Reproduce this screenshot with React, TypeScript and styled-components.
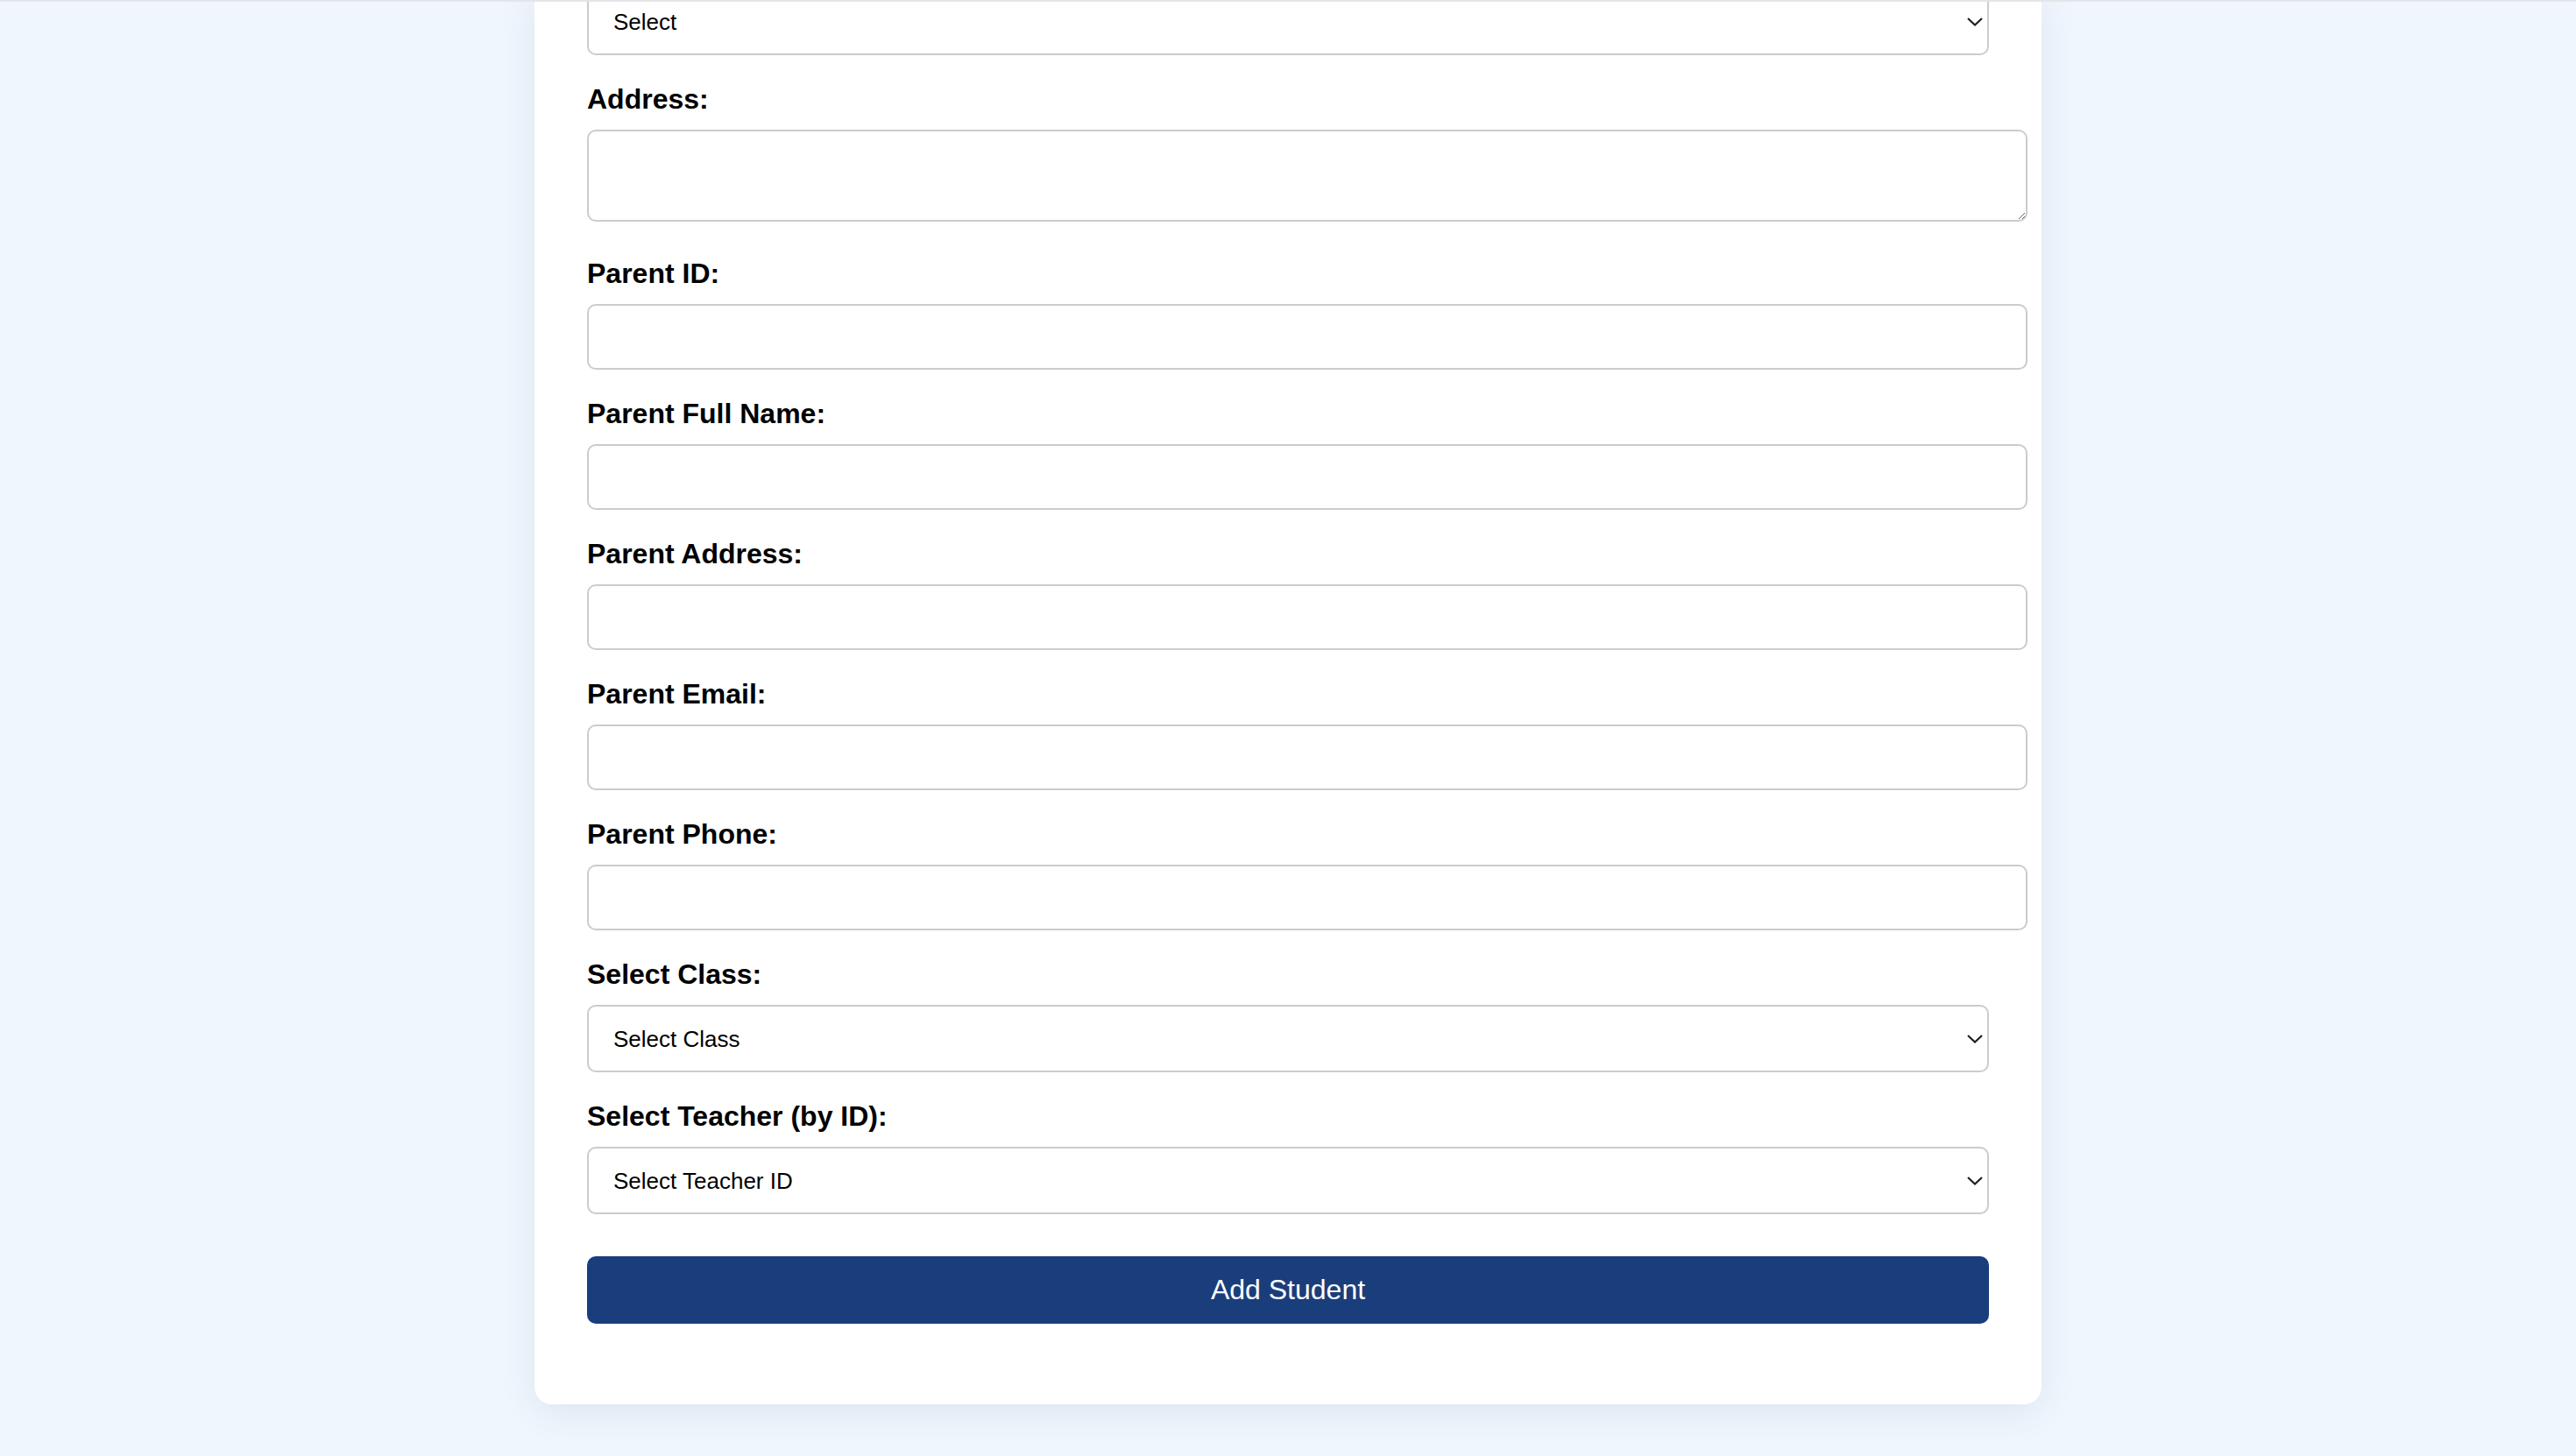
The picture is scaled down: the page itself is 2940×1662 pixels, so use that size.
import React from 'react';
import styled, { createGlobalStyle } from 'styled-components';

const GlobalStyle = createGlobalStyle`
  html, body {
    margin: 0;
    padding: 0;
    background: #f0f6fd;
  }
  * {
    font-family: 'Liberation Sans', Arial, sans-serif;
  }
`;

const Page = styled.div`
  min-height: 100vh;
  border-top: 2px solid #e3e5e9;
  overflow: hidden;
  background: #f0f6fd;
`;

const Card = styled.div`
  width: 1720px;
  box-sizing: border-box;
  margin: 0 auto;
  padding: 0 60px 92px;
  background: #ffffff;
  border-radius: 0 0 20px 20px;
  box-shadow: 0 10px 40px rgba(40, 70, 120, 0.09);
`;

const Field = styled.div<{ $first?: boolean; $gap?: number }>`
  margin-top: ${(p) => (p.$first ? '-16px' : '0')};
  margin-bottom: ${(p) => p.$gap ?? 29}px;
`;

const Label = styled.label`
  display: block;
  font-size: 32px;
  font-weight: 700;
  line-height: 42px;
  color: #000;
  margin-bottom: 14px;
`;

const TextInput = styled.input`
  display: block;
  width: 100%;
  box-sizing: content-box;
  height: 31px;
  padding: 20px;
  border: 2px solid #cccccc;
  border-radius: 10px;
  background: #fff;
  font-size: 26px;
  outline: none;
`;

const TextArea = styled.textarea`
  display: block;
  width: 100%;
  box-sizing: content-box;
  height: 61px;
  padding: 20px;
  border: 2px solid #cccccc;
  border-radius: 10px;
  background: #fff;
  font-size: 26px;
  outline: none;
  resize: vertical;
`;

const SelectWrap = styled.div`
  position: relative;
`;

const Select = styled.select`
  display: block;
  width: 100%;
  height: 77px;
  box-sizing: border-box;
  padding: 0 40px 0 28px;
  border: 2px solid #cccccc;
  border-radius: 10px;
  background: #fff;
  color: #000;
  font-size: 26px;
  appearance: none;
  -webkit-appearance: none;
  outline: none;
`;

const Chevron = styled.svg`
  position: absolute;
  right: 7px;
  top: 50%;
  margin-top: -5px;
  pointer-events: none;
`;

const SubmitButton = styled.button`
  display: block;
  width: 100%;
  height: 77px;
  margin-top: 48px;
  border: none;
  border-radius: 10px;
  background: #1a3e7b;
  color: #fff;
  font-size: 32px;
  cursor: pointer;
`;

const DropDown: React.FC<{ placeholder: string }> = ({ placeholder }) => (
  <SelectWrap>
    <Select defaultValue="">
      <option value="">{placeholder}</option>
    </Select>
    <Chevron width="18" height="10" viewBox="0 0 18 10">
      <polyline points="1,1 9,8.5 17,1" fill="none" stroke="#1f1f1f" strokeWidth="2.2" />
    </Chevron>
  </SelectWrap>
);

const inputs = ['Parent ID:', 'Parent Full Name:', 'Parent Address:', 'Parent Email:', 'Parent Phone:'];

const App: React.FC = () => {
  return (
    <Page>
      <GlobalStyle />
      <Card>
        <Field $first>
          <DropDown placeholder="Select" />
        </Field>

        {/* textarea sits inline in the original, so it leaves extra room below */}
        <Field $gap={38}>
          <Label>Address:</Label>
          <TextArea />
        </Field>

        {inputs.map((label) => (
          <Field key={label}>
            <Label>{label}</Label>
            <TextInput type="text" />
          </Field>
        ))}

        <Field>
          <Label>Select Class:</Label>
          <DropDown placeholder="Select Class" />
        </Field>

        <Field>
          <Label>Select Teacher (by ID):</Label>
          <DropDown placeholder="Select Teacher ID" />
        </Field>

        <SubmitButton>Add Student</SubmitButton>
      </Card>
    </Page>
  );
};

export default App;
